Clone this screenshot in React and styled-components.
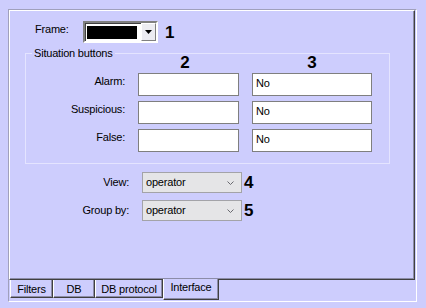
import { Fragment } from "react";
import styled, { createGlobalStyle } from "styled-components";

const BG = "#CDCDFD";

const GlobalStyle = createGlobalStyle`
  html, body {
    margin: 0;
    padding: 0;
    background: ${BG};
  }
  body {
    font-family: "Liberation Sans", Arial, sans-serif;
    font-size: 11px;
    letter-spacing: -0.2px;
    color: #000;
  }
`;

const Window = styled.div`
  width: 426px;
  height: 308px;
  box-sizing: border-box;
  padding: 9px 0 0 8px;
  background: ${BG};
  overflow: hidden;
`;

const Frame = styled.div`
  width: 409px;
  height: 293px;
  box-sizing: border-box;
  border: 1px solid;
  border-color: #A0A0BC #fff #fff #A0A0BC;
  display: flex;
  flex-direction: column;
`;

const Page = styled.div`
  width: 406px;
  height: 270px;
  box-sizing: border-box;
  border: 1px solid;
  border-color: #fff #404040 #404040 #fff;
  box-shadow: inset -1px -1px 0 #8C8CA8;
  padding: 10px 0 0 15px;
`;

const FrameRow = styled.div`
  display: flex;
  align-items: flex-start;
  height: 22px;
`;

const FrameLabel = styled.span`
  margin-left: 10px;
  width: 48px;
  padding-top: 2px;
  line-height: 13px;
`;

const Combo = styled.div`
  display: flex;
  width: 75px;
  height: 22px;
  box-sizing: border-box;
  border: 2px solid;
  border-color: #808080 #fff #fff #808080;
  box-shadow: inset 1px 1px 0 #404040;
  background: #fff;
`;

const Swatch = styled.div`
  width: 50px;
  height: 13px;
  margin: 3px 4px 0 2px;
  background: ${(p) => p.$color};
`;

const DropButton = styled.div`
  flex: 1;
  display: flex;
  align-items: center;
  justify-content: center;
  box-sizing: border-box;
  border: 1px solid;
  border-color: #fff #808080 #808080 #fff;
  background: #ECECF2;
`;

const Digit = styled.span`
  font-size: 17px;
  font-weight: bold;
  letter-spacing: 0;
  line-height: ${(p) => p.$lh || "22px"};
  margin-left: ${(p) => p.$ml || "0"};
  grid-column: ${(p) => p.$col || "auto"};
  justify-self: center;
`;

const GroupBox = styled.div`
  width: 365px;
  margin-top: 10px;
  box-sizing: border-box;
  border: 1px solid #E4E4FF;
  padding: 0 0 11px 0;
`;

const GroupTitle = styled.div`
  width: fit-content;
  margin: -7px 0 0 6px;
  padding: 0 2px;
  background: ${BG};
  line-height: 13px;
`;

const SituationGrid = styled.div`
  display: grid;
  grid-template-columns: 99px 101px 120px;
  grid-template-rows: 11px 23px 23px 23px;
  column-gap: 13px;
  row-gap: 5px;
  margin-top: -3px;
`;

const RowLabel = styled.span`
  justify-self: end;
  padding-top: 2px;
  line-height: 13px;
`;

const TextBox = styled.div`
  height: 23px;
  box-sizing: border-box;
  border: 1px solid #7F7F7F;
  background: #fff;
  padding: 3px 0 0 3px;
  line-height: 13px;
`;

const OptionsGrid = styled.div`
  display: grid;
  grid-template-columns: 115px 100px auto;
  grid-template-rows: 21px 21px;
  column-gap: 2px;
  row-gap: 7px;
  margin-top: 8px;
  align-items: center;
`;

const OptionLabel = styled.span`
  justify-self: end;
  padding-right: 11px;
  line-height: 13px;
`;

const Select = styled.div`
  height: 21px;
  box-sizing: border-box;
  border: 1px solid #A3A3A8;
  background: #E5E5E7;
  display: flex;
  align-items: center;
  justify-content: space-between;
  padding: 0 7px 0 3px;
  line-height: 13px;
`;

const OptionDigit = styled(Digit)`
  justify-self: start;
  line-height: 21px;
`;

const TabRow = styled.div`
  display: flex;
  align-items: flex-start;
  padding-left: 1px;
  height: 21px;
`;

const Tab = styled.div`
  width: ${(p) => p.$w}px;
  height: ${(p) => (p.$active ? 21 : 18)}px;
  margin-top: ${(p) => (p.$active ? -1 : 0)}px;
  box-sizing: border-box;
  border-left: 1px solid #fff;
  border-right: 1px solid #404040;
  border-bottom: 1px solid #404040;
  box-shadow: inset -1px -1px 0 #8C8CA8;
  background: ${BG};
  padding-top: ${(p) => (p.$active ? 2 : 3)}px;
  text-align: center;
  line-height: 13px;
  white-space: nowrap;
`;

const situations = [
  { label: "Alarm:", value: "No" },
  { label: "Suspicious:", value: "No" },
  { label: "False:", value: "No" },
];

const options = [
  { label: "View:", value: "operator", num: "4" },
  { label: "Group by:", value: "operator", num: "5" },
];

const tabs = [
  { name: "Filters", w: 43 },
  { name: "DB", w: 42 },
  { name: "DB protocol", w: 68 },
  { name: "Interface", w: 56, active: true },
];

function Chevron() {
  return (
    <svg width="7" height="4" viewBox="0 0 7 4">
      <polyline points="0.5,0.5 3.5,3.5 6.5,0.5" fill="none" stroke="#6A6A70" strokeWidth="1" />
    </svg>
  );
}

function DownTriangle() {
  return (
    <svg width="7" height="4" viewBox="0 0 7 4">
      <polygon points="0,0 7,0 3.5,4" fill="#000" />
    </svg>
  );
}

export default function App() {
  return (
    <>
      <GlobalStyle />
      <Window>
        <Frame>
          <Page>
            <FrameRow>
              <FrameLabel>Frame:</FrameLabel>
              <Combo>
                <Swatch $color="#000" />
                <DropButton>
                  <DownTriangle />
                </DropButton>
              </Combo>
              <Digit $ml="7px" $lh="24px">1</Digit>
            </FrameRow>

            <GroupBox>
              <GroupTitle>Situation buttons</GroupTitle>
              <SituationGrid>
                <Digit $col="2" $lh="11px" $ml="-7px">2</Digit>
                <Digit $col="3" $lh="11px">3</Digit>
                {situations.map((s) => (
                  <Fragment key={s.label}>
                    <RowLabel>{s.label}</RowLabel>
                    <TextBox />
                    <TextBox>{s.value}</TextBox>
                  </Fragment>
                ))}
              </SituationGrid>
            </GroupBox>

            <OptionsGrid>
              {options.map((o) => (
                <Fragment key={o.label}>
                  <OptionLabel>{o.label}</OptionLabel>
                  <Select>
                    <span>{o.value}</span>
                    <Chevron />
                  </Select>
                  <OptionDigit>{o.num}</OptionDigit>
                </Fragment>
              ))}
            </OptionsGrid>
          </Page>

          <TabRow>
            {tabs.map((t) => (
              <Tab key={t.name} $w={t.w} $active={t.active}>
                {t.name}
              </Tab>
            ))}
          </TabRow>
        </Frame>
      </Window>
    </>
  );
}
